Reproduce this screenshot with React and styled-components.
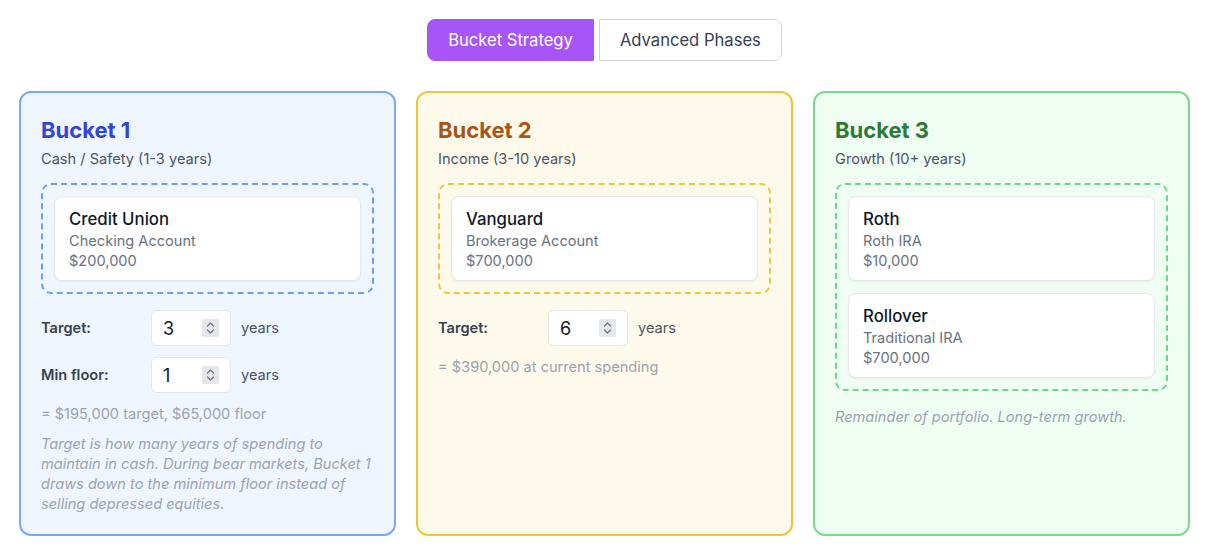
import React from 'react';
import styled, { createGlobalStyle } from 'styled-components';

const GlobalStyle = createGlobalStyle`
  * { box-sizing: border-box; }
  body {
    margin: 0;
    background: #ffffff;
    font-family: Inter, "Noto Sans", "Liberation Sans", sans-serif;
    color: #111827;
  }
`;

const themes = {
  blue: { bg: '#eff6ff', border: '#7aa7f7', title: '#3445d4', dash: '#6f9cf6' },
  amber: { bg: '#fefaeb', border: '#f2c43c', title: '#a8551a', dash: '#f2c43c' },
  green: { bg: '#f0fdf3', border: '#74dc8a', title: '#2e7a34', dash: '#6ad883' },
};

const Page = styled.div`
  padding: 19px 18px 12px 19px;
`;

const Tabs = styled.div`
  display: flex;
  justify-content: center;
  gap: 5px;
  margin-bottom: 30px;
`;

const Tab = styled.button`
  font-family: inherit;
  font-size: 16.6px;
  line-height: 22px;
  height: 42px;
  padding: 0 20px;
  cursor: pointer;
  border: 1px solid ${p => (p.$active ? '#a855f7' : '#d1d5db')};
  background: ${p => (p.$active ? '#a855f7' : '#ffffff')};
  color: ${p => (p.$active ? '#ffffff' : '#374151')};
  border-radius: 0;

  &:first-child {
    border-radius: 8px 0 0 8px;
  }

  &:last-child {
    border-radius: 0 8px 8px 0;
  }
`;

const Grid = styled.div`
  display: grid;
  grid-template-columns: repeat(3, 1fr);
  gap: 20px;
`;

const Card = styled.div`
  background: ${p => themes[p.$tone].bg};
  border: 2px solid ${p => themes[p.$tone].border};
  border-radius: 12px;
  padding: 22px 20px 20px;
  display: flex;
  flex-direction: column;
`;

const Title = styled.h2`
  margin: 0;
  font-size: 22px;
  line-height: 30px;
  font-weight: 700;
  color: ${p => themes[p.$tone].title};
`;

const Subtitle = styled.div`
  margin-top: 4px;
  font-size: 14.6px;
  line-height: 20px;
  color: #4b5563;
`;

const DropZone = styled.div`
  margin-top: 14px;
  border: 2px dashed ${p => themes[p.$tone].dash};
  border-radius: 10px;
  padding: 11px;
  display: flex;
  flex-direction: column;
  gap: 12px;
`;

const Account = styled.div`
  background: #ffffff;
  border: 1px solid #e5e7eb;
  border-radius: 8px;
  box-shadow: 0 1px 2px rgba(0, 0, 0, 0.05);
  padding: 11px 14px 9px;
`;

const AccountName = styled.div`
  font-size: 16.8px;
  line-height: 22px;
  font-weight: 500;
  color: #111827;
`;

const AccountMeta = styled.div`
  font-size: 14.6px;
  line-height: 20px;
  color: #6b7280;
  margin-top: ${p => (p.$first ? '1px' : '0')};
`;

const Settings = styled.div`
  margin-top: 16px;
  display: flex;
  flex-direction: column;
  gap: 11px;
`;

const Row = styled.div`
  display: flex;
  align-items: center;
`;

const Label = styled.div`
  width: 110px;
  font-size: 14.6px;
  font-weight: 600;
  color: #374151;
`;

const NumberBox = styled.div`
  width: 80px;
  height: 36px;
  background: #ffffff;
  border: 1px solid #e5e7eb;
  border-radius: 6px;
  display: flex;
  align-items: center;
  justify-content: space-between;
  padding: 0 11px;
  font-size: 18px;
  color: #111827;
`;

const Spinner = styled.span`
  width: 17px;
  height: 18px;
  background: #e5e7eb;
  border-radius: 2px;
  display: flex;
  align-items: center;
  justify-content: center;
  color: #6b7280;
`;

const Unit = styled.div`
  margin-left: 10px;
  font-size: 14.6px;
  color: #4b5563;
`;

const Summary = styled.div`
  margin-top: 11px;
  font-size: 14.6px;
  line-height: 20px;
  color: #9ca3af;
`;

const Note = styled.p`
  margin: ${p => (p.$afterZone ? '16px' : '10px')} 0 0;
  font-size: 14.6px;
  line-height: 20px;
  font-style: italic;
  color: #9ca3af;
`;

const SpinIcon = () => (
  <svg width="9" height="14" viewBox="0 0 9 14" fill="none" stroke="currentColor" strokeWidth="1.2" strokeLinecap="round" strokeLinejoin="round">
    <polyline points="1.5,5 4.5,2 7.5,5" />
    <polyline points="1.5,9 4.5,12 7.5,9" />
  </svg>
);

const NumberField = ({ label, value }) => (
  <Row>
    <Label>{label}</Label>
    <NumberBox>
      {value}
      <Spinner><SpinIcon /></Spinner>
    </NumberBox>
    <Unit>years</Unit>
  </Row>
);

const buckets = [
  {
    tone: 'blue',
    title: 'Bucket 1',
    subtitle: 'Cash / Safety (1-3 years)',
    accounts: [{ name: 'Credit Union', type: 'Checking Account', amount: '$200,000' }],
    fields: [{ label: 'Target:', value: 3 }, { label: 'Min floor:', value: 1 }],
    summary: '= $195,000 target, $65,000 floor',
    note: 'Target is how many years of spending to maintain in cash. During bear markets, Bucket 1 draws down to the minimum floor instead of selling depressed equities.',
  },
  {
    tone: 'amber',
    title: 'Bucket 2',
    subtitle: 'Income (3-10 years)',
    accounts: [{ name: 'Vanguard', type: 'Brokerage Account', amount: '$700,000' }],
    fields: [{ label: 'Target:', value: 6 }],
    summary: '= $390,000 at current spending',
  },
  {
    tone: 'green',
    title: 'Bucket 3',
    subtitle: 'Growth (10+ years)',
    accounts: [
      { name: 'Roth', type: 'Roth IRA', amount: '$10,000' },
      { name: 'Rollover', type: 'Traditional IRA', amount: '$700,000' },
    ],
    note: 'Remainder of portfolio. Long-term growth.',
  },
];

const App = () => (
  <Page>
    <GlobalStyle />
    <Tabs>
      <Tab $active>Bucket Strategy</Tab>
      <Tab>Advanced Phases</Tab>
    </Tabs>
    <Grid>
      {buckets.map(b => (
        <Card key={b.title} $tone={b.tone}>
          <Title $tone={b.tone}>{b.title}</Title>
          <Subtitle>{b.subtitle}</Subtitle>
          <DropZone $tone={b.tone}>
            {b.accounts.map(a => (
              <Account key={a.name}>
                <AccountName>{a.name}</AccountName>
                <AccountMeta $first>{a.type}</AccountMeta>
                <AccountMeta>{a.amount}</AccountMeta>
              </Account>
            ))}
          </DropZone>
          {b.fields && (
            <Settings>
              {b.fields.map(f => (
                <NumberField key={f.label} label={f.label} value={f.value} />
              ))}
            </Settings>
          )}
          {b.summary && <Summary>{b.summary}</Summary>}
          {b.note && <Note $afterZone={!b.fields}>{b.note}</Note>}
        </Card>
      ))}
    </Grid>
  </Page>
);

export default App;
